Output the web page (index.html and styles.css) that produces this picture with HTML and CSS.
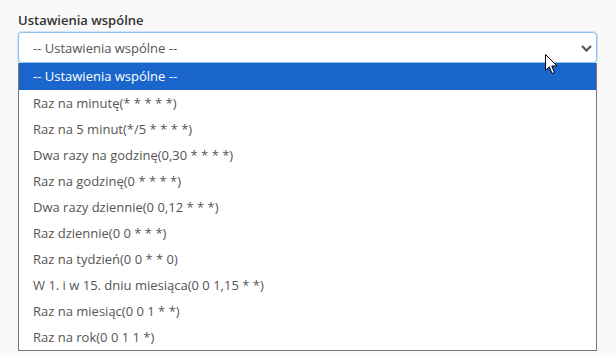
FILE: index.html
```html
<!DOCTYPE html>
<html lang="pl">
<head>
<meta charset="utf-8">
<link rel="stylesheet" href="styles.css">
</head>
<body>
<div class="field">
  <div class="label">Ustawienia wspólne</div>
  <div class="select">
    <span class="value">-- Ustawienia wspólne --</span>
    <svg class="chev" width="11" height="7" viewBox="0 0 11 7"><path d="M1 1 L5.5 5.5 L10 1" fill="none" stroke="#555" stroke-width="2.2"/></svg>
  </div>
  <ul class="list">
    <li class="opt selected">-- Ustawienia wspólne --</li>
    <li class="opt">Raz na minutę(* * * * *)</li>
    <li class="opt">Raz na 5 minut(*/5 * * * *)</li>
    <li class="opt">Dwa razy na godzinę(0,30 * * * *)</li>
    <li class="opt">Raz na godzinę(0 * * * *)</li>
    <li class="opt">Dwa razy dziennie(0 0,12 * * *)</li>
    <li class="opt">Raz dziennie(0 0 * * *)</li>
    <li class="opt">Raz na tydzień(0 0 * * 0)</li>
    <li class="opt">W 1. i w 15. dniu miesiąca(0 0 1,15 * *)</li>
    <li class="opt">Raz na miesiąc(0 0 1 * *)</li>
    <li class="opt">Raz na rok(0 0 1 1 *)</li>
  </ul>
  <svg class="cursor" width="13" height="21" viewBox="0 0 13 21"><path d="M0.5 0.5 L0.5 16.5 L4.3 12.8 L7 19.5 L9.4 18.5 L6.8 12 L12 12 Z" fill="#fff" stroke="#000" stroke-width="1" stroke-linejoin="miter"/></svg>
</div>
</body>
</html>
```
FILE: styles.css
```css
html, body {
  margin: 0;
  padding: 0;
  background: #f9f9f9;
  font-family: "Open Sans", "Noto Sans", sans-serif;
}
.field {
  position: relative;
  padding: 11px 19px 0 18px;
}
.label {
  font-size: 13px;
  font-weight: 600;
  color: #333;
  line-height: 18px;
  margin-bottom: 3px;
}
.select {
  box-sizing: border-box;
  height: 31px;
  border: 1px solid #8fc0f0;
  border-radius: 4px;
  background: #fff;
  box-shadow: 0 0 0 1px rgba(140, 190, 240, 0.35);
  display: flex;
  align-items: center;
  justify-content: space-between;
  padding: 0 4px 0 14px;
  font-size: 13px;
  color: #555;
}
.chev {
  display: block;
  margin-top: 1px;
}
.list {
  list-style: none;
  margin: 0;
  padding: 0;
  background: #fff;
  border: 1px solid #777;
  border-top: none;
  font-size: 13px;
  color: #555;
}
.opt {
  height: 26px;
  line-height: 26px;
  padding-left: 14px;
}
.opt.selected {
  background: #1a66cc;
  color: #fff;
  height: 27px;
  line-height: 27px;
}
.cursor {
  position: absolute;
  left: 545px;
  top: 54px;
}
```
